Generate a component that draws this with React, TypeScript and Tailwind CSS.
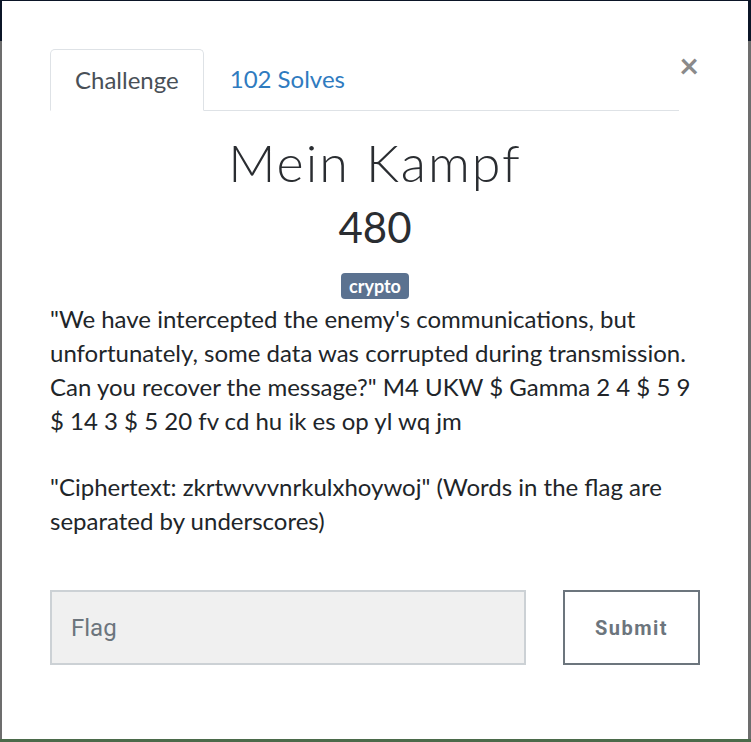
import React from 'react';

/* ------------------------------------------------------------------
 * challenge modal (CTFd style)
 * ---------------------------------------------------------------- */
const description = [
  `"We have intercepted the enemy's communications, but unfortunately, some data was corrupted during transmission. Can you recover the message?" M4 UKW $ Gamma 2 4 $ 5 9 $ 14 3 $ 5 20 fv cd hu ik es op yl wq jm`,
  `"Ciphertext: zkrtwvvvnrkulxhoywoj" (Words in the flag are separated by underscores)`,
];

const App: React.FC = () => {
  return (
    <div className="h-[742px] w-[751px] overflow-hidden bg-[linear-gradient(to_bottom,#0b1527_0px,#0b1527_41px,#6d6d6d_41px,#6d6d6d_739px,#4b6a4a_739px)] pt-px pl-[2px]">
      <div
        className="relative flex h-[738px] w-[746px] flex-col bg-white px-[48px] pt-[48px] text-[#212529]"
        style={{ fontFamily: 'Lato, "Open Sans", sans-serif' }}
      >
        {/* close */}
        <button className="absolute right-[49px] top-[47px] text-[34px] font-bold leading-none text-[#8a8a8a]">
          ×
        </button>

        {/* tabs */}
        <nav className="mr-[21px] flex border-b border-[#dee2e6]">
          <span className="-mb-px rounded-t-[5px] border border-[#dee2e6] border-b-white bg-white px-[24px] py-[15px] text-[24px] leading-[30px] text-[#495057]">
            Challenge
          </span>
          <span className="px-[26px] py-[15px] text-[24px] leading-[30px] text-[#2f7bbf]">
            102 Solves
          </span>
        </nav>

        {/* header */}
        <h2 className="mt-[21px] text-center text-[52px] font-light leading-[60px] tracking-[2px] text-[#2a2d31]">
          Mein Kampf
        </h2>
        <h3 className="mt-[10px] text-center text-[42px] leading-[50px] text-[#2a2d31]">480</h3>
        <div className="mt-[21px] flex justify-center">
          <span className="rounded-[4px] bg-[#5b7290] px-[8px] text-[18px] font-bold leading-[26px] text-white">
            crypto
          </span>
        </div>

        {/* description */}
        <div className="mt-[3px] text-[24px] leading-[34px]">
          {description.map((p, i) => (
            <p key={i} className={i === 0 ? 'mb-[32px]' : ''}>
              {p}
            </p>
          ))}
        </div>

        {/* submit row */}
        <form className="mt-[52px] flex gap-[37px]">
          <input
            placeholder="Flag"
            className="h-[75px] w-[476px] border-2 border-[#ccd1d5] bg-[#f0f0f0] px-[19px] text-[24px] outline-none placeholder:text-[#6c757d]"
            style={{ fontFamily: 'Roboto, sans-serif' }}
          />
          <button
            type="button"
            className="h-[75px] w-[137px] border-2 border-[#6c757d] bg-white text-[20px] font-bold tracking-[1.5px] text-[#6c757d]"
            style={{ fontFamily: 'Roboto, sans-serif' }}
          >
            Submit
          </button>
        </form>
      </div>
    </div>
  );
};

export default App;
